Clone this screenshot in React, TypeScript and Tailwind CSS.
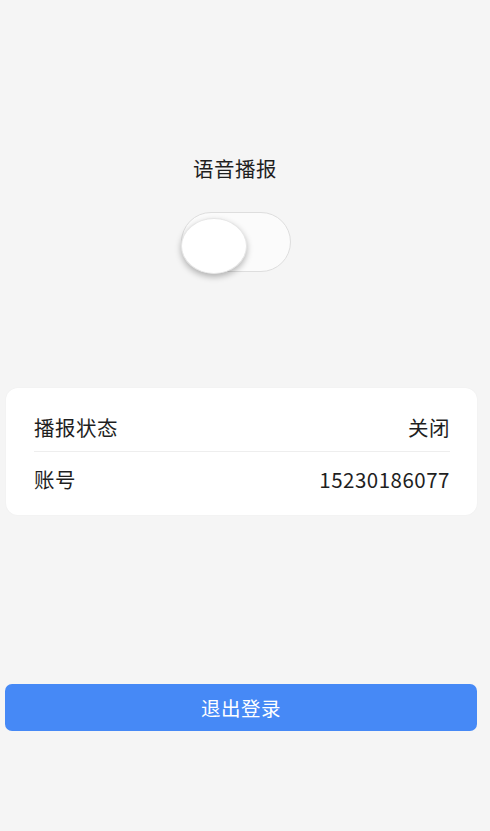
import React from "react";

export default function App() {
  return (
    <div
      className="min-h-[831px] w-full bg-[#f5f5f5] text-[#1f1f1f] flex flex-col"
      style={{ fontFamily: '"Noto Sans CJK SC", "Noto Sans", sans-serif' }}
    >
      <div className="flex flex-col items-center pr-[20px] pt-[154px]">
        <div className="text-[20.5px] leading-[28px] tracking-[0.5px]">语音播报</div>
        <div className="relative mt-[30px] ml-[2px] h-[60px] w-[110px] rounded-full border-[1.5px] border-[#dedede] bg-[#fbfbfb]">
          <div className="absolute left-[-1px] top-[5px] h-[56px] w-[66px] rounded-[50%] bg-white shadow-[0_3px_6px_rgba(0,0,0,0.28)] border border-[#e6e6e6]" />
        </div>
      </div>

      <div className="ml-[6px] mr-[13px] mt-[116px] rounded-[12px] bg-white pl-[28px] pr-[27px] pt-[25px] pb-[22px] shadow-[0_0_2px_rgba(0,0,0,0.04)]">
        <div className="flex items-center justify-between pb-[10px] border-b border-[#eeeeee] text-[20.5px] leading-[28px]">
          <span className="tracking-[0.5px]">播报状态</span>
          <span className="tracking-[0.5px]">关闭</span>
        </div>
        <div className="flex items-center justify-between pt-[13px] text-[20.5px] leading-[28px]">
          <span className="tracking-[0.5px]">账号</span>
          <span className="tracking-[0.5px]">15230186077</span>
        </div>
      </div>

      <button className="ml-[5px] mr-[13px] mt-[169px] h-[47px] rounded-[7px] bg-[#4689f6] text-white text-[19.5px] leading-[47px] tracking-[0.5px]">
        退出登录
      </button>
    </div>
  );
}
